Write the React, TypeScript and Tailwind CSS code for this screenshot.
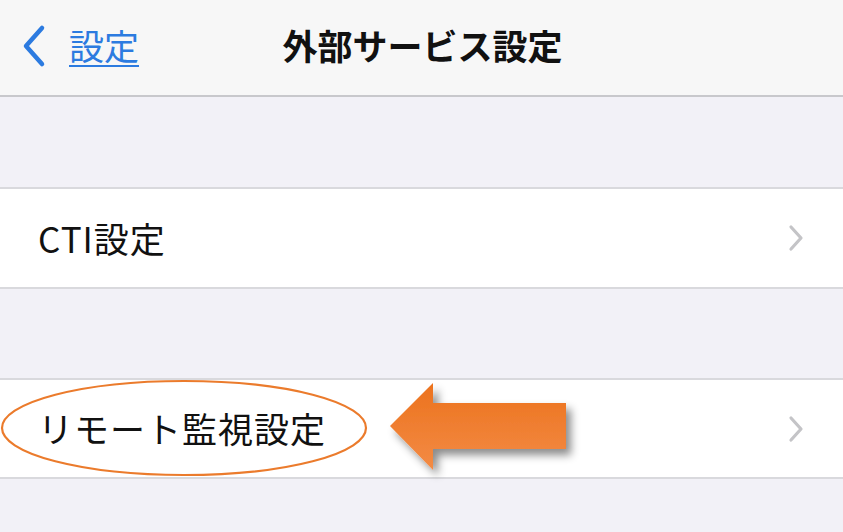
const font = { fontFamily: '"Noto Sans CJK JP", "Noto Sans", sans-serif' }

const Chevron = () => (
  <svg width="18" height="28" viewBox="0 0 18 28" className="mr-[38px]">
    <path d="M4 3 L14 14 L4 25" fill="none" stroke="#c4c4c7" strokeWidth="3.2" strokeLinecap="round" strokeLinejoin="round" />
  </svg>
)

const Row = ({ label, h }: { label: string; h: string }) => (
  <div className={`${h} bg-white border-y-2 border-[#d9d9dd] flex items-center justify-between`}>
    <span className="pl-[38px] text-[35px] text-[#111] tracking-[1px]">{label}</span>
    <Chevron />
  </div>
)

export default function App() {
  return (
    <div className="relative w-[843px] h-[532px] overflow-hidden bg-[#f2f1f7]" style={font}>
      <div className="relative h-[97px] bg-[#f7f7f7] border-b-2 border-[#c8c8cc] flex items-center">
        <div className="flex items-center pl-[20px] -mt-[4px]">
          <svg width="28" height="44" viewBox="0 0 28 44">
            <path d="M22 4 L6 22 L22 40" fill="none" stroke="#2c7be0" strokeWidth="4.5" strokeLinecap="round" strokeLinejoin="round" />
          </svg>
          <span className="ml-[21px] text-[35px] text-[#2c7be0] underline underline-offset-[5px] decoration-[2px]">設定</span>
        </div>
        <div className="absolute inset-0 flex items-center justify-center -mt-[4px]">
          <span className="text-[35px] font-bold text-[#111] ml-[2px]">外部サービス設定</span>
        </div>
      </div>

      <div className="h-[90px]" />
      <Row label="CTI設定" h="h-[102px]" />
      <div className="h-[89px]" />
      <Row label="リモート監視設定" h="h-[101px]" />

      <svg className="absolute left-0 top-0" width="843" height="532" viewBox="0 0 843 532">
        <defs>
          <linearGradient id="ar" x1="0" y1="0" x2="0" y2="1">
            <stop offset="0" stopColor="#ec721d" />
            <stop offset="1" stopColor="#f38b45" />
          </linearGradient>
          <filter id="sh" x="-20%" y="-30%" width="150%" height="170%">
            <feDropShadow dx="5" dy="6" stdDeviation="4" floodColor="#000" floodOpacity="0.45" />
          </filter>
        </defs>
        <ellipse cx="184" cy="428" rx="182" ry="47" fill="none" stroke="#eb7b2c" strokeWidth="2.2" />
        <polygon points="390,426 433,383 433,403 566,403 566,449 433,449 433,470" fill="url(#ar)" filter="url(#sh)" />
      </svg>
    </div>
  )
}
